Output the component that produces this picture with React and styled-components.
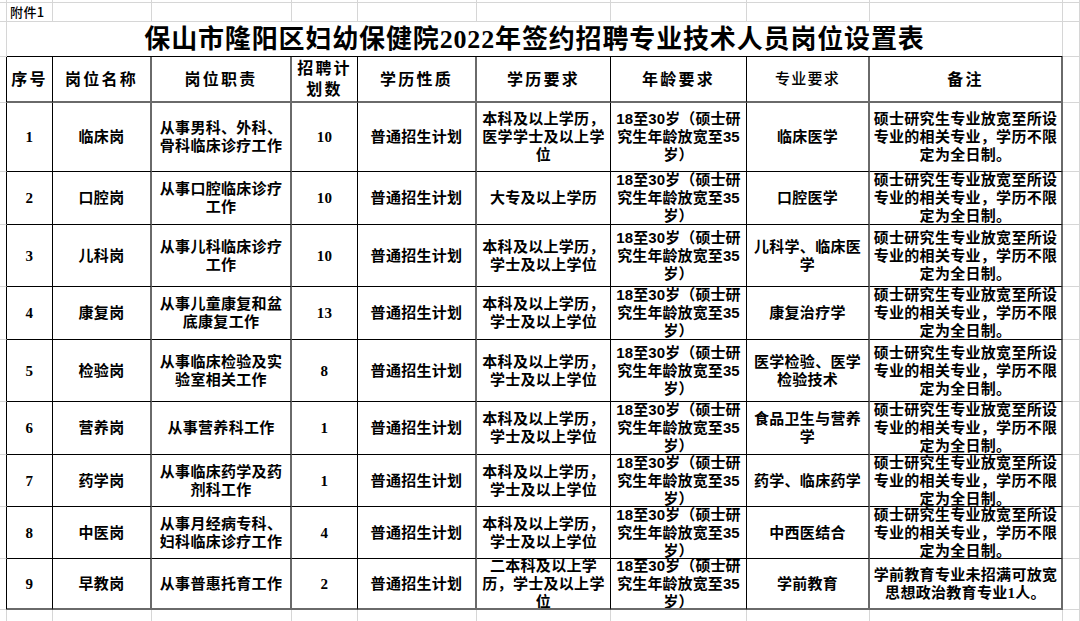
import styled, { createGlobalStyle } from 'styled-components'

const GlobalStyle = createGlobalStyle`
  html, body {
    margin: 0;
    padding: 0;
    background: #fff;
  }
  body {
    font-family: "Liberation Serif", "Noto Sans CJK SC", serif;
    color: #000;
  }
`

const COLS = [7, 46, 99, 140, 66, 119, 134, 136, 123, 193, 17]
const BODY_ROWS = [69, 53, 62, 53, 62, 53, 52, 52, 51]

// right border of each table column (index 1..9)
const HEAVY = { 2: true, 3: true, 5: true, 8: true, 9: true }

const edges = {
  grid: '1px solid #d6d6d6',
  line: '1px solid #000',
  heavy: '2px solid #6a6a6a',
  none: 'none',
}

const Sheet = styled.div`
  display: grid;
  grid-template-columns: ${COLS.map((c) => c + 'px').join(' ')};
  grid-template-rows: 3px 19px 35px 46px ${BODY_ROWS.map((r) => r + 'px').join(' ')} 11px;
  width: 1080px;
  height: 621px;
  overflow: hidden;
`

const Cell = styled.div`
  box-sizing: border-box;
  grid-column: span ${(p) => p.$span || 1};
  border-right: ${(p) => edges[p.$r || 'grid']};
  border-bottom: ${(p) => edges[p.$b || 'grid']};
  display: flex;
  flex-direction: column;
  align-items: center;
  justify-content: center;
  text-align: center;
  overflow: hidden;
  white-space: nowrap;
  font-size: 15px;
  font-weight: 700;
  line-height: 18px;
  letter-spacing: 0.3px;
`

const AgeCell = styled(Cell)`
  font-family: "Liberation Sans", "Noto Sans CJK SC", sans-serif;
  letter-spacing: 0.1px;
`

const HeadCell = styled(Cell)`
  font-size: ${(p) => (p.$light ? '15px' : '16px')};
  font-weight: ${(p) => (p.$light ? 500 : 700)};
  letter-spacing: ${(p) => (p.$light ? '1.2px' : '2.2px')};
  line-height: 21px;
`

const TitleCell = styled(Cell)`
  font-size: 26px;
  letter-spacing: 0.85px;
  line-height: 30px;
  padding-top: 2px;
`

const LabelCell = styled(Cell)`
  align-items: flex-start;
  padding-left: 3px;
  font-family: "Noto Sans CJK SC", sans-serif;
  font-size: 13px;
  font-weight: 500;
  letter-spacing: 0.4px;
  line-height: 16px;
`

const Line = styled.span`
  display: block;
`

const HEADERS = [
  ['序号'],
  ['岗位名称'],
  ['岗位职责'],
  ['招聘计', '划数'],
  ['学历性质'],
  ['学历要求'],
  ['年龄要求'],
  ['专业要求'],
  ['备注'],
]

const AGE = ['18至30岁（硕士研', '究生年龄放宽至35', '岁）']
const NOTE = ['硕士研究生专业放宽至所设', '专业的相关专业，学历不限', '定为全日制。']
const PLAN = '普通招生计划'
const BACHELOR = ['本科及以上学历，', '学士及以上学位']

const rows = [
  ['1', '临床岗', ['从事男科、外科、', '骨科临床诊疗工作'], '10', PLAN, ['本科及以上学历，', '医学学士及以上学', '位'], AGE, '临床医学', NOTE],
  ['2', '口腔岗', ['从事口腔临床诊疗', '工作'], '10', PLAN, '大专及以上学历', AGE, '口腔医学', NOTE],
  ['3', '儿科岗', ['从事儿科临床诊疗', '工作'], '10', PLAN, BACHELOR, AGE, ['儿科学、临床医', '学'], NOTE],
  ['4', '康复岗', ['从事儿童康复和盆', '底康复工作'], '13', PLAN, BACHELOR, AGE, '康复治疗学', NOTE],
  ['5', '检验岗', ['从事临床检验及实', '验室相关工作'], '8', PLAN, BACHELOR, AGE, ['医学检验、医学', '检验技术'], NOTE],
  ['6', '营养岗', '从事营养科工作', '1', PLAN, BACHELOR, AGE, ['食品卫生与营养', '学'], NOTE],
  ['7', '药学岗', ['从事临床药学及药', '剂科工作'], '1', PLAN, BACHELOR, AGE, '药学、临床药学', NOTE],
  ['8', '中医岗', ['从事月经病专科、', '妇科临床诊疗工作'], '4', PLAN, BACHELOR, AGE, '中西医结合', NOTE],
  ['9', '早教岗', '从事普惠托育工作', '2', PLAN, ['二本科及以上学', '历，学士及以上学', '位'], AGE, '学前教育', ['学前教育专业未招满可放宽', '思想政治教育专业1人。']],
]

const lines = (v) => (Array.isArray(v) ? v : [v]).map((t, i) => <Line key={i}>{t}</Line>)

function GridRow({ label }) {
  return COLS.map((_, i) =>
    i === 1 && label ? (
      <LabelCell key={i}>{label}</LabelCell>
    ) : (
      <Cell key={i} />
    )
  )
}

function TableRow({ values, head, last }) {
  const bottom = head || last ? 'heavy' : 'line'
  const Comp = head ? HeadCell : Cell
  return (
    <>
      <Cell $r="line" />
      {values.map((v, i) => {
        const col = i + 1
        const C = !head && col === 7 ? AgeCell : Comp
        return (
          <C key={i} $r={HEAVY[col] ? 'heavy' : 'line'} $b={bottom} $light={head && col === 8}>
            {lines(v)}
          </C>
        )
      })}
      <Cell />
    </>
  )
}

export default function App() {
  return (
    <>
      <GlobalStyle />
      <Sheet>
        <GridRow />
        <GridRow label="附件1" />
        <Cell />
        <TitleCell $span={9} $b="line">
          保山市隆阳区妇幼保健院2022年签约招聘专业技术人员岗位设置表
        </TitleCell>
        <Cell />
        <TableRow values={HEADERS} head />
        {rows.map((r, i) => (
          <TableRow key={i} values={r} last={i === rows.length - 1} />
        ))}
        {COLS.map((_, i) => (
          <Cell key={i} $b="none" />
        ))}
      </Sheet>
    </>
  )
}
